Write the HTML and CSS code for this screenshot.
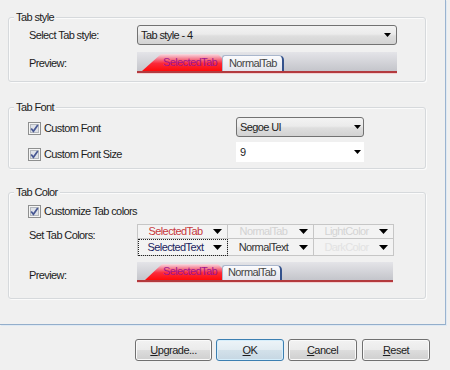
FILE: index.html
```html
<!DOCTYPE html>
<html>
<head>
<meta charset="utf-8">
<link rel="stylesheet" href="styles.css">
</head>
<body>
<div class="window">
  <div class="panel">
    <div class="group g-style">
      <div class="legend">Tab style</div>
      <div class="row row-combo">
        <span class="label">Select Tab style:</span>
        <div class="combo combo-wide"><span class="ctext">Tab style - 4</span><svg class="arr" width="7" height="4" viewBox="0 0 7 4"><path d="M0 0H7L3.5 4Z"/></svg></div>
      </div>
      <div class="row row-preview">
        <span class="label">Preview:</span>
        <div class="strip">
          <div class="tab-sel">SelectedTab</div>
          <div class="tab-norm">NormalTab</div>
        </div>
      </div>
    </div>

    <div class="group g-font">
      <div class="legend">Tab Font</div>
      <div class="row frow frow1">
        <label class="check"><svg class="cb" width="13" height="13" viewBox="0 0 13 13"><rect x="0.5" y="0.5" width="12" height="12" fill="#f5f5f5" stroke="#8e8f8f"/><rect x="2.5" y="2.5" width="8" height="8" fill="#dfe2e8" stroke="#b4b8be"/><path d="M3.2 6.4L5.4 9.3L9.8 2.9" fill="none" stroke="#475793" stroke-width="1.7"/></svg><span>Custom Font</span></label>
        <div class="combo combo-font"><span class="ctext">Segoe UI</span><svg class="arr" width="7" height="4" viewBox="0 0 7 4"><path d="M0 0H7L3.5 4Z"/></svg></div>
      </div>
      <div class="row frow frow2">
        <label class="check"><svg class="cb" width="13" height="13" viewBox="0 0 13 13"><rect x="0.5" y="0.5" width="12" height="12" fill="#f5f5f5" stroke="#8e8f8f"/><rect x="2.5" y="2.5" width="8" height="8" fill="#dfe2e8" stroke="#b4b8be"/><path d="M3.2 6.4L5.4 9.3L9.8 2.9" fill="none" stroke="#475793" stroke-width="1.7"/></svg><span>Custom Font Size</span></label>
        <div class="combo combo-size"><span class="ctext">9</span><svg class="arr" width="7" height="4" viewBox="0 0 7 4"><path d="M0 0H7L3.5 4Z"/></svg></div>
      </div>
    </div>

    <div class="group g-color">
      <div class="legend">Tab Color</div>
      <div class="row crow">
        <label class="check"><svg class="cb" width="13" height="13" viewBox="0 0 13 13"><rect x="0.5" y="0.5" width="12" height="12" fill="#f5f5f5" stroke="#8e8f8f"/><rect x="2.5" y="2.5" width="8" height="8" fill="#dfe2e8" stroke="#b4b8be"/><path d="M3.2 6.4L5.4 9.3L9.8 2.9" fill="none" stroke="#475793" stroke-width="1.7"/></svg><span>Customize Tab colors</span></label>
      </div>
      <div class="row row-grid">
        <span class="label label-grid">Set Tab Colors:</span>
        <div class="cgrid">
          <div class="cell c-seltab"><span class="ct">SelectedTab</span><svg class="garr" width="9" height="5" viewBox="0 0 9 5"><path d="M0 0H9L4.5 5Z"/></svg></div>
          <div class="cell c-normtab"><span class="ct">NormalTab</span><svg class="garr" width="9" height="5" viewBox="0 0 9 5"><path d="M0 0H9L4.5 5Z"/></svg></div>
          <div class="cell c-light"><span class="ct">LightColor</span><svg class="garr" width="9" height="5" viewBox="0 0 9 5"><path d="M0 0H9L4.5 5Z"/></svg></div>
          <div class="cell c-seltext focus"><span class="ct">SelectedText</span><svg class="garr" width="9" height="5" viewBox="0 0 9 5"><path d="M0 0H9L4.5 5Z"/></svg></div>
          <div class="cell c-normtext"><span class="ct">NormalText</span><svg class="garr" width="9" height="5" viewBox="0 0 9 5"><path d="M0 0H9L4.5 5Z"/></svg></div>
          <div class="cell c-dark"><span class="ct">DarkColor</span><svg class="garr" width="9" height="5" viewBox="0 0 9 5"><path d="M0 0H9L4.5 5Z"/></svg></div>
        </div>
      </div>
      <div class="row row-preview2">
        <span class="label label-prev2">Preview:</span>
        <div class="strip strip2">
          <div class="tab-sel">SelectedTab</div>
          <div class="tab-norm">NormalTab</div>
        </div>
      </div>
    </div>
  </div>

  <div class="buttons">
    <button class="btn b-upgrade"><u>U</u>pgrade...</button>
    <button class="btn b-ok default"><u>O</u>K</button>
    <button class="btn b-cancel"><u>C</u>ancel</button>
    <button class="btn b-reset"><u>R</u>eset</button>
  </div>
</div>
</body>
</html>
```

FILE: styles.css
```css
html, body {
  margin: 0;
  padding: 0;
  background: #f0f0f0;
}
body {
  width: 450px;
  height: 370px;
  overflow: hidden;
  font-family: "Liberation Sans", Arial, sans-serif;
  font-size: 11px;
  letter-spacing: -0.6px;
  color: #1c1c1c;
}
.window {
  width: 450px;
  height: 370px;
}
.panel {
  box-sizing: border-box;
  width: 446px;
  height: 325px;
  padding-top: 17px;
  border-right: 1px solid #9ab3cf;
  border-bottom: 1px solid #93aecb;
  box-shadow: 1px 1px 0 #dfe9f3;
}
.group {
  box-sizing: border-box;
  width: 418px;
  margin-left: 8px;
  border: 1px solid #d6d9dc;
  border-radius: 3px;
  box-shadow: inset 1px 1px 0 #fbfbfb, 1px 1px 0 #fbfbfb;
  padding-left: 20px;
}
.legend {
  width: fit-content;
  margin: -7px 0 0 -15px;
  padding: 0 2px;
  line-height: 13px;
  height: 13px;
  background: #f0f0f0;
}
.row {
  display: flex;
  align-items: center;
}
.label {
  width: 108px;
  flex: none;
}
.g-style { padding-bottom: 8px; }
.row-combo { margin-top: 1px; height: 20px; }
.row-preview { margin-top: 7px; height: 21px; }
.row-preview .label { padding-top: 1px; }

.g-font { margin-top: 25px; padding-bottom: 6px; }
.frow { height: 20px; }
.frow1 { margin-top: 3px; }
.frow2 { margin-top: 5px; }
.frow .check { width: 208px; margin-left: -1px; padding-top: 2px; }
.frow2 .check { padding-top: 4px; }

.check {
  display: flex;
  align-items: center;
  gap: 3px;
  line-height: 13px;
}
.cb { flex: none; display: block; }

.combo {
  box-sizing: border-box;
  display: flex;
  align-items: center;
  justify-content: space-between;
  height: 20px;
  border: 1px solid #727272;
  border-radius: 3px;
  background: linear-gradient(#f3f3f3 0%, #ebebeb 45%, #dedede 55%, #d2d2d2 100%);
  padding: 0 5px 0 3px;
  line-height: 13px;
}
.combo .arr { display: block; flex: none; }
.combo-wide { width: 260px; }
.combo-font { width: 128px; padding-right: 2px; }
.combo-size {
  width: 128px;
  border-color: transparent;
  border-radius: 0;
  background: #ffffff;
  padding-right: 2px;
}

/* tab preview strips */
.strip {
  box-sizing: border-box;
  width: 260px;
  height: 21px;
  display: flex;
  align-items: flex-end;
  padding-left: 5px;
  background: linear-gradient(#e4e4e8, #c4c5cb);
  border-bottom: 2px solid #b33a3e;
  box-shadow: 0 1px 0 #f3cfd1;
}
.tab-sel {
  box-sizing: border-box;
  height: 17px;
  width: 80px;
  padding-left: 21px;
  line-height: 16px;
  color: #a0168e;
  background: linear-gradient(#f9dbe2 0%, #f47d90 28%, #fb2a3a 55%, #ff0a0a 100%);
  clip-path: polygon(0 100%, 19px 0, calc(100% - 4px) 0, 100% 4px, 100% 100%);
}
.tab-norm {
  box-sizing: border-box;
  height: 16px;
  padding: 0 5px 0 6px;
  line-height: 14px;
  color: #454545;
  background: linear-gradient(#fbfbfd, #e3e4ec);
  border: 1px solid #a9b6cc;
  border-right: 2px solid #34528c;
  border-bottom: none;
  border-radius: 3px 5px 0 0;
}
.strip2 { width: 256px; height: 20px; padding-left: 8px; }
.strip2 .tab-sel { height: 16px; width: 77px; padding-left: 18px; line-height: 15px; clip-path: polygon(0 100%, 17px 0, calc(100% - 4px) 0, 100% 4px, 100% 100%); }
.strip2 .tab-norm { height: 15px; line-height: 13px; padding: 0 4px 0 5px; }

/* colour group */
.g-color { margin-top: 23px; padding-bottom: 16px; }
.crow { margin-top: 5px; height: 14px; }
.crow .check { margin-left: -1px; }
.row-grid { margin-top: 6px; align-items: flex-start; }
.label-grid { padding-top: 5px; line-height: 13px; }
.row-preview2 { margin-top: 6px; height: 20px; }
.label-prev2 { padding-top: 6px; }

.cgrid {
  display: grid;
  grid-template-columns: 90px 86px 80px;
  grid-template-rows: 14px 17px;
  border-top: 1px solid #c6c6c6;
  border-left: 1px solid #c6c6c6;
}
.cell {
  box-sizing: border-box;
  display: flex;
  align-items: center;
  border-right: 1px solid #c6c6c6;
  border-bottom: 1px solid #c6c6c6;
  background: #f3f3f3;
  padding-right: 5px;
  line-height: 13px;
}
.cell .ct {
  flex: 1;
  text-align: center;
  white-space: nowrap;
}
.garr { display: block; flex: none; }
.c-seltab { color: #c7383c; }
.c-seltext { color: #1b1d5e; }
.c-normtab { color: #d2d2d2; }
.c-normtext { color: #333333; }
.c-light { color: #d4d4d4; }
.c-dark { color: #e2e2e2; }
.focus {
  outline: 1px dotted #222;
  outline-offset: -1px;
}

/* buttons */
.buttons {
  display: flex;
  gap: 4px;
  margin-top: 14px;
  padding-left: 135px;
}
.btn {
  box-sizing: border-box;
  height: 22px;
  margin: 0;
  padding: 0;
  font-family: "Liberation Sans", Arial, sans-serif;
  font-size: 11px;
  letter-spacing: -0.5px;
  color: #1c1c1c;
  border: 1px solid #707070;
  border-radius: 3px;
  background: linear-gradient(#f2f2f2 0%, #ebebeb 49%, #dddddd 51%, #cfcfcf 100%);
  box-shadow: inset 0 0 0 1px #fafafa;
}
.b-upgrade { width: 77px; }
.b-ok { width: 68px; }
.b-cancel { width: 69px; }
.b-reset { width: 68px; margin-left: 1px; }
.default {
  border-color: #3c7fb1;
  background: linear-gradient(#edf4f8 0%, #e2ecf2 49%, #d3e1ea 51%, #c6d7e3 100%);
  box-shadow: inset 0 0 0 1px #d6eefb;
}
```
